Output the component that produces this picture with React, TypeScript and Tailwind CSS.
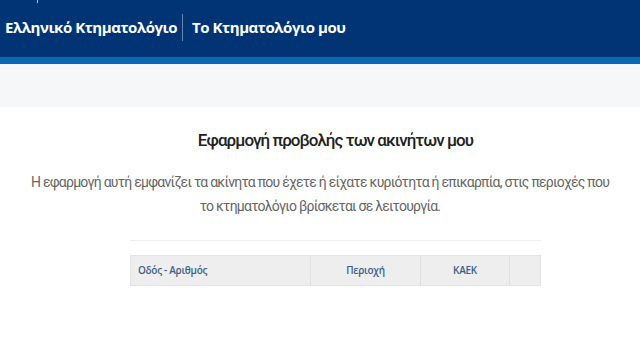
export default function App() {
  const cols = [
    { label: "Οδός - Αριθμός", w: "w-[180px] justify-start pl-[7px]" },
    { label: "Περιοχή", w: "w-[110px] justify-center" },
    { label: "ΚΑΕΚ", w: "w-[89px] justify-center" },
    { label: "", w: "flex-1" },
  ];

  return (
    <div className="w-[640px] h-[360px] overflow-hidden bg-white" style={{ fontFamily: "Roboto, 'Noto Sans', sans-serif" }}>
      {/* top bar */}
      <div className="relative h-[57px] bg-[#003474] flex items-center pl-[5px] pb-[3px]">
        <span className="absolute left-[37px] top-0 w-px h-[3px] bg-white/70"></span>
        <span className="text-white font-bold text-[15px] tracking-[-0.45px]" style={{ fontFamily: "'Open Sans', sans-serif" }}>
          Ελληνικό Κτηματολόγιο
        </span>
        <span className="ml-[5px] mr-[9px] w-px h-[27px] bg-white/40"></span>
        <span className="text-white font-bold text-[15px] tracking-[-0.45px]" style={{ fontFamily: "'Open Sans', sans-serif" }}>
          Το Κτηματολόγιο μου
        </span>
      </div>
      <div className="h-[7px] bg-[#0a68b4]"></div>
      <div className="h-[43px] bg-[#f6f7f9] border-t border-[#eef9ff]"></div>

      {/* content */}
      <div className="flex flex-col">
        <div className="ml-[130px] w-[411px] text-center mt-[21px]">
          <h1 className="text-[17px] font-medium text-[#222] tracking-[-0.95px]">Εφαρμογή προβολής των ακινήτων μου</h1>
        </div>
        <p className="mt-[16px] text-[14px] leading-[24px] text-[#666] text-center tracking-[-0.75px] px-[30px]">
          Η εφαρμογή αυτή εμφανίζει τα ακίνητα που έχετε ή είχατε κυριότητα ή επικαρπία, στις περιοχές που το κτηματολόγιο βρίσκεται σε λειτουργία.
        </p>
        <div className="ml-[130px] w-[411px]">
          <div className="mt-[22px] h-px bg-[#eeeeee]"></div>
          <div className="mt-[14px] h-[31px] flex bg-[#eeeeee] border border-[#e2e2e2]">
            {cols.map((c, i) => (
              <div key={i} className={`${c.w} h-full flex items-center ${i < 3 ? "border-r border-[#e0e0e0]" : ""}`}>
                <span className="text-[10px] font-semibold text-[#3d5f85] tracking-[-0.3px]" style={{ fontFamily: "'Open Sans', sans-serif" }}>
                  {c.label}
                </span>
              </div>
            ))}
          </div>
        </div>
      </div>
    </div>
  );
}
